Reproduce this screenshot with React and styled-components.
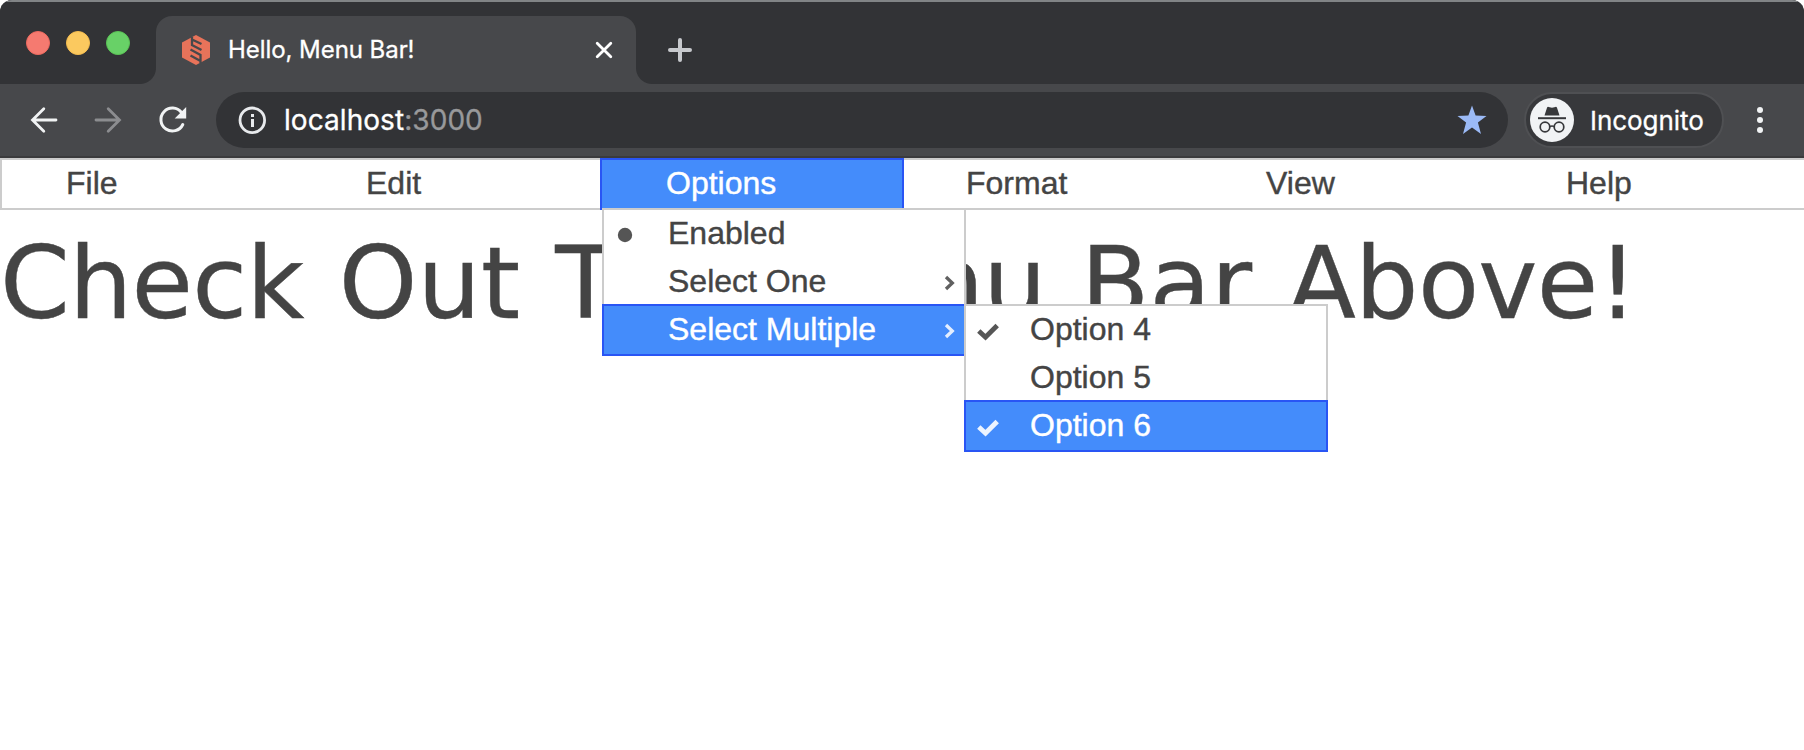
import React from "react";
import styled, { createGlobalStyle, css } from "styled-components";

const GlobalStyle = createGlobalStyle`
  *, *::before, *::after { box-sizing: border-box; }
  body { margin: 0; background: #fff; overflow: hidden; }
`;

const Window = styled.div`
  width: 1804px;
  height: 750px;
  overflow: hidden;
  background: #fff;
  font-family: Inter, sans-serif;
`;

/* ---------- browser chrome ---------- */

const Chrome = styled.header`
  display: flex;
  flex-direction: column;
  height: 158px;
  border-radius: 12px 12px 0 0;
  background: #47484b;
  border-bottom: 2px solid #3b3b3d;
  overflow: hidden;
`;

const TabStrip = styled.div`
  display: flex;
  align-items: flex-start;
  height: 84px;
  padding-left: 26px;
  background: #323336;
  box-shadow: inset 0 2px 0 #818486;
`;

const Lights = styled.div`
  display: flex;
  gap: 16px;
  margin-top: 31px;
`;

const Light = styled.span`
  width: 24px;
  height: 24px;
  border-radius: 50%;
  background: ${(p) => p.$fill};
  border: 1px solid ${(p) => p.$ring};
`;

const flare = css`
  content: "";
  position: absolute;
  bottom: 0;
  width: 16px;
  height: 16px;
`;

const Tab = styled.div`
  position: relative;
  display: flex;
  align-items: center;
  width: 480px;
  height: 68px;
  margin: 16px 0 0 26px;
  padding: 0 23px 0 26px;
  border-radius: 16px 16px 0 0;
  background: #47484b;
  &::before {
    ${flare}
    left: -16px;
    background: radial-gradient(circle at 0 0, #323336 15.5px, #47484b 16.5px);
  }
  &::after {
    ${flare}
    right: -16px;
    background: radial-gradient(circle at 100% 0, #323336 15.5px, #47484b 16.5px);
  }
`;

const TabTitle = styled.span`
  flex: 1;
  margin-left: 18px;
  color: #fff;
  font-size: 24px;
  line-height: 30px;
  letter-spacing: -0.06px;
  white-space: nowrap;
  -webkit-text-stroke: 0.3px;
`;

const NewTab = styled.div`
  display: flex;
  margin: 38px 0 0 32px;
`;

const Toolbar = styled.div`
  display: flex;
  align-items: center;
  height: 72px;
  padding: 0 41px 0 30px;
`;

const NavButtons = styled.div`
  display: flex;
  align-items: center;
  gap: 36px;
  width: 186px;
`;

const AddressBar = styled.div`
  display: flex;
  align-items: center;
  width: 1292px;
  height: 56px;
  padding: 0 20px 0 22px;
  border-radius: 28px;
  background: #323336;
`;

const Url = styled.span`
  flex: 1;
  margin-left: 18px;
  color: #fff;
  font-size: 28px;
  line-height: 34px;
  letter-spacing: 0.06px;
  -webkit-text-stroke: 0.3px;
`;

const Port = styled.span`
  color: #98999b;
`;

const Badge = styled.div`
  display: flex;
  align-items: center;
  width: 200px;
  height: 56px;
  margin-left: 16px;
  padding-left: 4px;
  border: 2px solid #4f5053;
  border-radius: 28px;
  background: #37383b;
  color: #fff;
  font-size: 26px;
  -webkit-text-stroke: 0.3px;
`;

const BadgeLabel = styled.span`
  margin: 1px 0 0 16px;
  letter-spacing: -0.05px;
`;

const Kebab = styled.div`
  display: flex;
  flex-direction: column;
  gap: 4px;
  margin-left: auto;
`;

const KebabDot = styled.span`
  width: 6px;
  height: 6px;
  border-radius: 50%;
  background: #f1f3f4;
`;

/* ---------- page ---------- */

const MenuBar = styled.nav`
  position: relative;
  z-index: 1;
  display: grid;
  grid-template-columns: repeat(6, 300px);
  height: 52px;
  border: 2px solid #ccc;
  border-right: 0;
  color: #444;
  font: 32px/46px "Liberation Sans", Arial, sans-serif;
  -webkit-text-stroke: 0.4px;
`;

const highlight = css`
  color: #fff;
  background: #448cfb;
  border-color: #2955f4;
`;

const MenuItem = styled.div`
  position: relative;
  width: 304px;
  height: 52px;
  margin: -2px;
  padding-left: 64px;
  border: 2px solid transparent;
  ${(p) => p.$active && highlight}
`;

const Dropdown = styled.div`
  position: absolute;
  z-index: 2;
  top: ${(p) => (p.$nested ? "-2px" : "48px")};
  left: ${(p) => (p.$nested ? "100%" : "0")};
  display: flex;
  flex-direction: column;
  width: 364px;
  border: 2px solid #ccc;
  background: #fff;
  color: #444;
`;

const Row = styled.div`
  position: relative;
  display: flex;
  align-items: center;
  width: 364px;
  height: 52px;
  margin: -2px;
  border: 2px solid transparent;
  ${(p) => p.$active && highlight}
`;

const Mark = styled.span`
  display: flex;
  align-items: center;
  width: 64px;
  height: 48px;
  padding: 2px 0 0 10px;
`;

const RowLabel = styled.span`
  flex: 1;
  height: 48px;
  line-height: 46px;
  white-space: nowrap;
`;

const Arrow = styled.span`
  display: flex;
  width: 20px;
  margin-top: 2px;
`;

const Heading = styled.h1`
  margin: 16px 0 0;
  color: #444;
  font: 400 100px/116px "DejaVu Sans", Verdana, sans-serif;
  font-kerning: none;
  word-spacing: 3.4px;
  white-space: nowrap;
  -webkit-text-stroke: 0.4px;
`;

const Word = styled.span`
  letter-spacing: ${(p) => p.$tracking}px;
`;

const Favicon = () => (
  <svg width="28" height="30" viewBox="0 0 28 30">
    <path d="M14 0L28 7.5V22.5L14 30L0 22.5V7.5Z" fill="#e8735a" />
    <path
      d="M10 2V10L19.500 15M10 4.500L19.500 9M8.500 14.500L18.500 20V28M8.500 20.500L18.500 26"
      fill="none"
      stroke="#47484b"
      strokeWidth="2.3"
    />
  </svg>
);

const CloseIcon = () => (
  <svg width="18" height="18" viewBox="0 0 18 18" stroke="#fff" strokeWidth="2.8" strokeLinecap="round">
    <path d="M2.200 2.200L15.800 15.800M15.800 2.200L2.200 15.800" />
  </svg>
);

const PlusIcon = () => (
  <svg width="24" height="24" viewBox="0 0 24 24" stroke="#c7c9cd" strokeWidth="4" strokeLinecap="round">
    <path d="M12 2V22M2 12H22" />
  </svg>
);

const NavArrow = ({ color, flip }) => (
  <svg width="28" height="28" viewBox="0 0 28 28" fill="none" stroke={color} strokeWidth="2.8" strokeLinecap="round">
    <path
      d="M26 14H3M13.800 2.700L2.500 14L13.800 25.300"
      transform={flip ? "translate(28 0) scale(-1 1)" : undefined}
    />
  </svg>
);

const ReloadIcon = () => (
  <svg width="29" height="28" viewBox="0 0 29 28">
    <path d="M24.800 18.500A11.500 11.500 0 1 1 23.500 6.500" fill="none" stroke="#f1f3f4" strokeWidth="3" strokeLinecap="round" />
    <path d="M28.200 1V12.500H16.700Z" fill="#f1f3f4" />
  </svg>
);

const InfoIcon = () => (
  <svg width="28" height="28" viewBox="0 0 28 28">
    <circle cx="14.300" cy="14.300" r="12.300" fill="none" stroke="#e8eaed" strokeWidth="2.800" />
    <path d="M13 8h3v3h-3zM13 13h3v8h-3z" fill="#e8eaed" />
  </svg>
);

const StarIcon = () => (
  <svg width="32" height="32" viewBox="0 0 32 32">
    <path
      d="M16 1.500L19.600 11.600L30.500 11.900L21.900 18.600L25 30L16 23.600L7 30L10.100 18.600L1.500 11.900L12.400 11.600Z"
      fill="#9bbaf6"
    />
  </svg>
);

const IncognitoIcon = () => (
  <svg width="44" height="44" viewBox="0 0 44 44">
    <circle cx="22" cy="22" r="22" fill="#f1f3f5" />
    <path d="M14.500 17.500L17 9.800Q17.400 8.600 18.600 8.900L22 9.800L25.400 8.900Q26.600 8.600 27 9.800L29.500 17.500Z" fill="#37383b" />
    <path d="M8 19.200H36V21.200H8Z" fill="#37383b" />
    <g fill="none" stroke="#37383b" strokeWidth="1.700">
      <circle cx="15" cy="29" r="4.800" />
      <circle cx="29" cy="29" r="4.800" />
      <path d="M19.800 28.600Q22 27.400 24.200 28.600" />
    </g>
  </svg>
);

const marks = {
  dot: (
    <svg width="24" height="24" viewBox="0 0 24 24">
      <circle cx="11" cy="12" r="7.200" fill="#555" />
    </svg>
  ),
  check: (
    <svg width="24" height="24" viewBox="0 0 24 24">
      <path d="M2.800 12L9.500 18.200L21.200 6.500" fill="none" stroke="currentColor" strokeOpacity="0.900" strokeWidth="4.900" />
    </svg>
  ),
};

const Chevron = () => (
  <svg width="12" height="16" viewBox="0 0 12 16">
    <path d="M2 2L8.300 8L2 14" fill="none" stroke="currentColor" strokeOpacity="0.850" strokeWidth="3.300" />
  </svg>
);

const MenuRow = ({ label, mark, active, arrow, children }) => (
  <Row $active={active}>
    <Mark>{mark && marks[mark]}</Mark>
    <RowLabel>{label}</RowLabel>
    {arrow && (
      <Arrow>
        <Chevron />
      </Arrow>
    )}
    {children}
  </Row>
);

export default function App() {
  return (
    <Window>
      <GlobalStyle />
      <Chrome>
        <TabStrip>
          <Lights>
            <Light $fill="#f57a70" $ring="#ee6a5f" />
            <Light $fill="#fbc95f" $ring="#f5bd4f" />
            <Light $fill="#68d167" $ring="#5ac455" />
          </Lights>
          <Tab>
            <Favicon />
            <TabTitle>Hello, Menu Bar!</TabTitle>
            <CloseIcon />
          </Tab>
          <NewTab>
            <PlusIcon />
          </NewTab>
        </TabStrip>
        <Toolbar>
          <NavButtons>
            <NavArrow color="#f1f3f4" />
            <NavArrow color="#8c8d90" flip />
            <ReloadIcon />
          </NavButtons>
          <AddressBar>
            <InfoIcon />
            <Url>
              localhost<Port>:3000</Port>
            </Url>
            <StarIcon />
          </AddressBar>
          <Badge>
            <IncognitoIcon />
            <BadgeLabel>Incognito</BadgeLabel>
          </Badge>
          <Kebab>
            <KebabDot />
            <KebabDot />
            <KebabDot />
          </Kebab>
        </Toolbar>
      </Chrome>
      <MenuBar>
        <MenuItem>File</MenuItem>
        <MenuItem>Edit</MenuItem>
        <MenuItem $active>
          Options
          <Dropdown>
            <MenuRow label="Enabled" mark="dot" />
            <MenuRow label="Select One" arrow />
            <MenuRow label="Select Multiple" arrow active>
              <Dropdown $nested>
                <MenuRow label="Option 4" mark="check" />
                <MenuRow label="Option 5" />
                <MenuRow label="Option 6" mark="check" active />
              </Dropdown>
            </MenuRow>
          </Dropdown>
        </MenuItem>
        <MenuItem>Format</MenuItem>
        <MenuItem>View</MenuItem>
        <MenuItem>Help</MenuItem>
      </MenuBar>
      <Heading>
        <Word $tracking={-0.8}>Check</Word> <Word $tracking={0}>Out</Word>{" "}
        <Word $tracking={-0.5}>The</Word> <Word $tracking={-1}>Menu</Word>{" "}
        <Word $tracking={0.15}>Bar</Word> <Word $tracking={-0.7}>Above!</Word>
      </Heading>
    </Window>
  );
}
